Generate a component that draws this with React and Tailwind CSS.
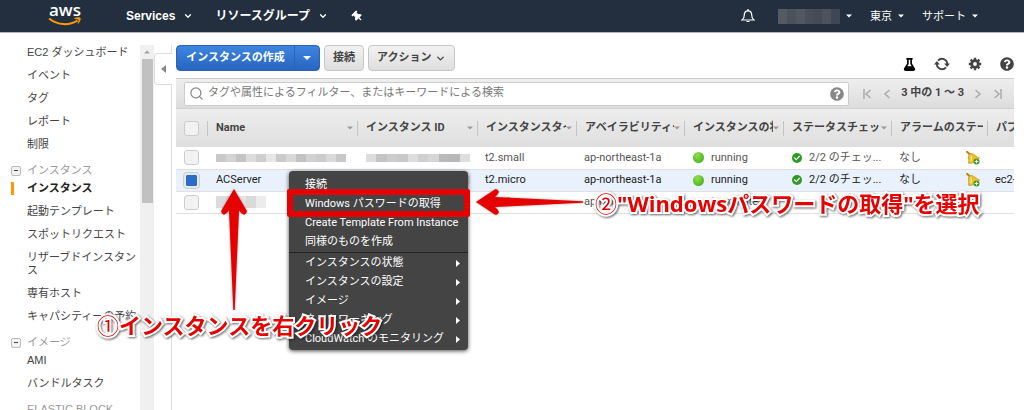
import React from 'react';
import { FaCheck, FaFlask, FaQuestionCircle, FaThumbtack } from 'react-icons/fa';
import { ChevronDown, Search } from 'lucide-react';

const sections = [
  {
    title: null,
    items: ['EC2 ダッシュボード', 'イベント', 'タグ', 'レポート', '制限'],
  },
  {
    title: 'インスタンス',
    items: [
      'インスタンス',
      '起動テンプレート',
      'スポットリクエスト',
      'リザーブドインスタンス',
      '専有ホスト',
      'キャパシティーの予約',
    ],
  },
  { title: 'イメージ', items: ['AMI', 'バンドルタスク'] },
  { title: 'ELASTIC BLOCK', items: [] },
];

const columns = [
  { label: 'Name', width: 'w-[150px]', sort: true },
  { label: 'インスタンス ID', width: 'w-[120px]', sort: true },
  { label: 'インスタンスタイプ', width: 'w-[99px]', sort: true },
  { label: 'アベイラビリティーゾーン', width: 'w-[108px]', sort: true },
  { label: 'インスタンスの状態', width: 'w-[99px]', sort: true },
  { label: 'ステータスチェック', width: 'w-[108px]', sort: true },
  { label: 'アラームのステータス', width: 'w-[96px]', sort: false },
  { label: 'パブリック DNS', width: '', sort: false },
];

const rows = [
  { name: null, id: true, type: 't2.small', zone: 'ap-northeast-1a', state: 'running', check: true, dns: '' },
  { name: 'ACServer', id: true, type: 't2.micro', zone: 'ap-northeast-1a', state: 'running', check: true, dns: 'ec2-', selected: true },
  { name: null, id: false, type: 't2.micro', zone: 'ap-northeast-1a', state: 'terminated', check: false, dns: '' },
];

const menuTop = ['接続', 'Windows パスワードの取得', 'Create Template From Instance', '同様のものを作成'];
const menuBottom = ['インスタンスの状態', 'インスタンスの設定', 'イメージ', 'ネットワーキング', 'CloudWatch のモニタリング'];

const mosaics = {
  wide: ['bg-[#c9c9c9]', 'bg-[#d4d4d4]', 'bg-[#c4c4c4]', 'bg-[#dcdcdc]', 'bg-[#cfcfcf]', 'bg-[#e6e6e6]', 'bg-[#cacaca]', 'bg-[#d8d8d8]', 'bg-[#c2c2c2]', 'bg-[#d2d2d2]', 'bg-[#cccccc]', 'bg-[#dadada]', 'bg-[#c8c8c8]'],
  id: ['bg-[#dcdcdc]', 'bg-[#c4c4c4]', 'bg-[#cdcdcd]', 'bg-[#c9c9c9]', 'bg-[#dddddd]', 'bg-[#cfcfcf]', 'bg-[#d6d6d6]', 'bg-[#bababa]', 'bg-[#b8b8b8]', 'bg-[#dedede]'],
  short: ['bg-[#dcdcdc]', 'bg-[#d4d4d4]', 'bg-[#e4e4e4]', 'bg-[#dadada]', 'bg-[#ececec]'],
  user: ['bg-[#555a62]', 'bg-[#4a515b]', 'bg-[#525861]', 'bg-[#484f59]', 'bg-[#444c57]', 'bg-[#4c535d]', 'bg-[#3f4753]'],
};

function Mosaic({ kind, className }) {
  return (
    <span className={`flex ${className}`}>
      {mosaics[kind].map((shade, idx) => (
        <span key={idx} className={`flex-1 ${shade}`} />
      ))}
    </span>
  );
}

function AwsLogo() {
  return (
    <a href="#home" aria-label="aws" className="flex w-9 flex-col items-center pb-1 text-white">
      <span className="font-['Open_Sans'] text-[17px] leading-4 font-semibold">aws</span>
      <svg viewBox="0 0 34 9" className="-mt-px h-[9px] w-[34px]" fill="none">
        <path d="M1 1.5C10 8.5 21 8.7 29.5 3.6" stroke="#f90" strokeWidth="2" />
        <path d="M26.5 1.4c2-.9 5-1 5.6-.3.5.8-.3 3.7-2 5.3.8-2 1-3.500.5-4-.6-.5-2.300-.5-4.100-1z" fill="#f90" stroke="#f90" strokeWidth=".8" />
      </svg>
    </a>
  );
}

function Caret({ className }) {
  return (
    <svg viewBox="0 0 8 4" className={`h-1 w-2 ${className}`}>
      <path d="M0 0h8L4 4z" fill="currentColor" />
    </svg>
  );
}

function Header() {
  return (
    <header className="flex h-[33px] items-center border-b border-[#b9b9b9] bg-[#232f3e] text-xs text-white">
      <div className="ml-[47px] flex items-center">
        <AwsLogo />
        <button className="ml-[43px] flex items-center gap-2 font-bold">
          Services
          <ChevronDown size={10} strokeWidth={3} />
        </button>
        <button className="ml-[22px] flex items-center gap-2 font-bold">
          リソースグループ
          <ChevronDown size={10} strokeWidth={3} />
        </button>
        <FaThumbtack size={11} className="ml-6 -rotate-45" />
      </div>
      <div className="mr-[46px] ml-auto flex items-center text-[11px]">
        <svg viewBox="0 0 14 14" className="h-[14px] w-[14px]" fill="none" stroke="#fff" strokeWidth="1.2">
          <path d="M1 11c2-1.500 2.300-2.500 2.300-5C3.300 3.300 5 1.800 7 1.800S10.700 3.300 10.700 6c0 2.500.3 3.500 2.300 5z" />
          <path d="M7 0v2M5.500 12.500h3" />
        </svg>
        <button aria-label="アカウント" className="ml-[23px] flex items-center gap-[6px]">
          <Mosaic kind="user" className="h-[15px] w-[62px]" />
          <Caret className="w-[6px]" />
        </button>
        <button className="ml-[18px] flex items-center gap-[6px]">
          東京
          <Caret className="w-[6px]" />
        </button>
        <button className="ml-[18px] flex items-center gap-[6px]">
          サポート
          <Caret className="w-[6px]" />
        </button>
      </div>
    </header>
  );
}

function Sidebar() {
  return (
    <aside className="flex w-[154px] shrink-0 pt-3">
      <nav className="flex w-[140px] flex-col gap-[13px] pt-px text-[11px] leading-[13px] text-[#444]">
        {sections.map((section, idx) => (
          <div key={idx}>
            {section.title && (
              <div className="mb-[5px] flex items-center gap-[6px] pl-[11px] text-[#999]">
                {section.items.length > 0 ? (
                  <button aria-label="折りたたむ" className="flex h-[10px] w-[10px] items-center justify-center rounded-xs border border-[#bbb] bg-[#f2f2f2]">
                    <span className="h-px w-1 bg-[#444]" />
                  </button>
                ) : (
                  <span className="w-[10px]" />
                )}
                <span className="whitespace-nowrap">{section.title}</span>
              </div>
            )}
            <ul className="flex flex-col gap-[10px]">
              {section.items.map((item) => {
                const active = item === section.title;
                return (
                  <li key={item} className={`ml-[11px] border-l-3 pl-[13px] ${active ? 'border-[#f90] font-bold text-[#222]' : 'border-transparent'}`}>
                    <a href="#nav">{item}</a>
                  </li>
                );
              })}
            </ul>
          </div>
        ))}
      </nav>
      <div className="flex w-[14px] flex-col items-center bg-[#f0f0f0]">
        <Caret className="my-[5px] w-[6px] rotate-180 text-[#a0a0a0]" />
        <div className="h-36 w-[11px] bg-[#c1c1c1]" />
      </div>
    </aside>
  );
}

function RefreshIcon() {
  return (
    <svg viewBox="0 0 16 14" className="h-[14px] w-4" fill="none" stroke="currentColor" strokeWidth="1.9">
      <path d="M4 3.700A5.200 5.200 0 0 1 13.200 7" />
      <path d="M12 10.300A5.200 5.200 0 0 1 2.800 7" />
      <path d="M10.200 6.500H16l-2.900 3.400zM5.800 7.500H0l2.900-3.400z" fill="currentColor" stroke="none" />
    </svg>
  );
}

function GearIcon() {
  return (
    <svg viewBox="0 0 14 14" className="h-[14px] w-[14px]" fill="none" stroke="currentColor">
      <circle cx="7" cy="7" r="3.300" strokeWidth="2.800" />
      <path d="M7 .8v2.400M7 10.800v2.400M.8 7h2.400M10.800 7h2.400M2.600 2.600l1.700 1.700M9.700 9.700l1.700 1.700M11.400 2.600 9.700 4.300M4.300 9.700l-1.700 1.700" strokeWidth="2.400" />
    </svg>
  );
}

function Toolbar() {
  const grey = 'flex h-[26px] items-center rounded-sm border border-[#c6c6c6] bg-linear-to-b from-[#f2f2f2] to-[#dedede] font-bold text-[#444]';
  return (
    <div className="flex items-start gap-1 text-[11px]">
      <div className="flex h-[26px] rounded-sm border border-[#2a62b5] bg-linear-to-b from-[#3d85e0] to-[#2765c0] font-bold text-white">
        <button className="w-[117px]">インスタンスの作成</button>
        <button aria-label="その他の作成方法" className="flex w-[25px] items-center justify-center border-l border-[#2a62b5]">
          <Caret className="" />
        </button>
      </div>
      <button className={`${grey} px-2`}>接続</button>
      <button className={`${grey} gap-1 px-2`}>
        アクション
        <ChevronDown size={11} strokeWidth={3} />
      </button>
      <div className="ml-auto flex items-center gap-[18px] pt-3 text-[#444]">
        <button aria-label="実験"><FaFlask size={13} className="text-black" /></button>
        <button aria-label="更新"><RefreshIcon /></button>
        <button aria-label="設定"><GearIcon /></button>
        <button aria-label="ヘルプ"><FaQuestionCircle size={14} /></button>
      </div>
    </div>
  );
}

function PageArrow({ flip, bar }) {
  return (
    <button aria-label={flip ? '次へ' : '前へ'} className="text-[#aaa]">
      <svg viewBox="0 0 9 10" className={`h-[10px] w-[9px] ${flip ? 'rotate-180' : ''}`} fill="none" stroke="currentColor" strokeWidth="1.5">
        <path d="M7.500 1 3 5l4.500 4" />
        {bar && <path d="M1 0v10" />}
      </svg>
    </button>
  );
}

function FilterBar() {
  return (
    <div className="flex h-[30px] items-center border-b border-[#d0d0d0] pr-3 pl-2">
      <div className="flex h-6 flex-1 items-center rounded-xs border border-[#ccc] bg-white px-1">
        <Search size={15} strokeWidth={2} className="text-[#888]" />
        <input
          aria-label="フィルター"
          placeholder="タグや属性によるフィルター、またはキーワードによる検索"
          className="min-w-0 flex-1 px-1 text-[11px] outline-none placeholder:text-[#777]"
        />
        <FaQuestionCircle size={14} className="text-[#888]" />
      </div>
      <div className="flex items-center gap-[10px] pl-[14px] text-[11px] font-bold text-[#444]">
        <PageArrow bar />
        <PageArrow />
        <span>3 中の 1 ～ 3</span>
        <PageArrow flip />
        <PageArrow flip bar />
      </div>
    </div>
  );
}

function RowCheck({ checked, label }) {
  return (
    <input
      type="checkbox"
      aria-label={label}
      defaultChecked={checked}
      className="ml-2 block h-[15px] w-[15px] appearance-none rounded-[3px] border border-[#ccc] bg-[#f2f2f2] bg-clip-padding checked:border-2 checked:border-[#e8e8e8] checked:bg-[#2a6cc8] checked:outline checked:outline-[#ccc]"
    />
  );
}

function BellAdd() {
  return (
    <svg viewBox="0 0 14 14" className="h-[14px] w-[14px] shrink-0">
      <path d="M1 .8 4.500 4" stroke="#b8860b" strokeWidth="2" strokeLinecap="round" />
      <path d="M3.500 3C7 1.200 8.500 5 13.300 6.800 12 9.500 7 13 2.500 12.300 3.500 8 1.200 5.500 3.500 3z" fill="#eec02a" stroke="#b48a10" strokeWidth=".6" />
      <path d="M5 4.500C5.800 6.500 5.500 8.500 5 10.500" stroke="#fbe795" strokeWidth="1.300" fill="none" />
      <circle cx="10.500" cy="10.500" r="3" fill="#3a9a1f" />
      <path d="M10.500 8.700v3.600M8.700 10.500h3.600" stroke="#fff" strokeWidth="1.100" />
    </svg>
  );
}

function InstanceTable() {
  return (
    <table className="w-full table-fixed border-collapse text-[11px]">
      <thead>
        <tr className="h-[38px] bg-linear-to-b from-[#eeeeee] to-[#dedede] text-left text-[#444]">
          <th className="w-[31px] p-0"><RowCheck label="すべて選択" /></th>
          {columns.map((col) => (
            <th key={col.label} className={`p-0 ${col.width}`}>
              <div className={`flex h-[15px] items-center border-l border-[#c4c4c4] pl-2 ${col.width ? 'pr-1' : ''}`}>
                <span className="flex-1 overflow-hidden whitespace-nowrap">{col.label}</span>
                {col.sort && <Caret className="w-[6px] shrink-0 text-[#999]" />}
              </div>
            </th>
          ))}
        </tr>
      </thead>
      <tbody>
        {rows.map((row, idx) => (
          <tr key={idx} className={`h-[22px] border-b border-[#e0e0e0] whitespace-nowrap ${row.selected ? 'bg-[#e9f1fd] text-[#222]' : 'text-[#555]'}`}>
            <td className="p-0"><RowCheck checked={row.selected} label="行を選択" /></td>
            <td className="p-0 pl-[9px]">
              {row.name || <Mosaic kind={idx === 0 ? 'wide' : 'short'} className={idx === 0 ? 'h-2 w-[130px]' : 'h-3 w-[50px]'} />}
            </td>
            <td className="p-0 pl-[9px]">{row.id && <Mosaic kind="id" className="h-2 w-[104px]" />}</td>
            <td className="p-0 pl-2">{row.type}</td>
            <td className="p-0 pl-2">{row.zone}</td>
            <td className="p-0 pl-[9px]">
              <span className="flex items-center gap-[7px]">
                <span className={`h-[11px] w-[11px] rounded-full ${row.state === 'running' ? 'bg-radial-[at_40%_30%] from-[#8ee04e] to-[#3aa410]' : 'bg-transparent'}`} />
                {row.state}
              </span>
            </td>
            <td className="p-0 pl-[9px]">
              {row.check && (
                <span className="flex items-center gap-[7px]">
                  <span className="flex h-[10px] w-[10px] items-center justify-center rounded-full bg-[#2f9a24] text-white">
                    <FaCheck size={6} />
                  </span>
                  2/2 のチェッ...
                </span>
              )}
            </td>
            <td className="p-0 pl-2">
              <span className="flex items-center justify-between pr-[7px]">
                なし
                {row.check && <BellAdd />}
              </span>
            </td>
            <td className="overflow-hidden p-0 pl-2">{row.dns}</td>
          </tr>
        ))}
      </tbody>
    </table>
  );
}

function ContextMenu() {
  return (
    <div role="menu" className="absolute top-[171px] left-[289px] w-[179px] rounded-sm bg-[#444] pt-[5px] pb-px font-['Roboto','Noto_Sans_CJK_JP',sans-serif] text-[11px] text-white shadow-[0_1px_4px_rgba(0,0,0,0.7)]">
      {menuTop.map((item) => (
        <button key={item} role="menuitem" className="block h-[19px] w-full pl-4 text-left whitespace-nowrap">{item}</button>
      ))}
      <div className="mb-px h-px bg-[#222]" />
      {menuBottom.map((item) => (
        <button key={item} role="menuitem" className="flex h-[19px] w-full items-center justify-between pr-2 pl-4 whitespace-nowrap">
          {item}
          <svg viewBox="0 0 4 7" className="h-[7px] w-1">
            <path d="M0 0l4 3.500L0 7z" fill="#fff" />
          </svg>
        </button>
      ))}
    </div>
  );
}

function Arrow({ className }) {
  return (
    <svg viewBox="0 0 26 122" preserveAspectRatio="none" className={`drop-shadow-[0_0_1px_rgba(0,0,0,0.4)] ${className}`}>
      <path d="M13 0 25.600 21.500Q26.300 24.500 23.500 25.600 21.500 26 18 21.500L13.700 121h-1.400L8 21.500Q4.500 26 2.500 25.600-.3 24.500.4 21.500z" fill="#e60000" />
    </svg>
  );
}

function Note({ num, children, className }) {
  return (
    <p className={`absolute font-['Open_Sans','Noto_Sans_CJK_JP',sans-serif] text-[22px] leading-8 font-bold whitespace-nowrap text-[#e60000] [paint-order:stroke_fill] [-webkit-text-stroke:4px_white] drop-shadow-[1px_1px_1px_rgba(0,0,0,0.6)] ${className}`}>
      <span className="font-normal">{num}</span>
      {children}
    </p>
  );
}

export default function App() {
  return (
    <div className="relative flex h-screen flex-col overflow-hidden bg-white font-['Liberation_Sans','Noto_Sans_CJK_JP',sans-serif]">
      <Header />
      <div className="flex min-h-0 flex-1">
        <Sidebar />
        <div className="flex w-[18px] shrink-0 flex-col pt-3">
          <div className="h-2 border-r border-[#ddd]" />
          <button aria-label="サイドバーを閉じる" className="flex h-8 items-center justify-center rounded-l-sm border border-r-0 border-[#ddd]">
            <svg viewBox="0 0 5 8" className="h-2 w-[5px]">
              <path d="M5 0v8L0 4z" fill="#888" />
            </svg>
          </button>
          <div className="flex-1 border-r border-[#ddd]" />
        </div>
        <main className="min-w-0 flex-1 pt-3 pl-1 font-['Roboto','Noto_Sans_CJK_JP',sans-serif]">
          <div className="pr-[10px]">
            <Toolbar />
            <div className="mt-[7px] border-t border-[#ccc] bg-linear-to-b from-[#eeeeee] to-[#dcdcdc]">
              <FilterBar />
            </div>
            <div className="overflow-hidden">
              <InstanceTable />
            </div>
          </div>
        </main>
      </div>
      <ContextMenu />
      <div className="absolute top-[189px] left-[287px] h-7 w-[183px] rounded-xs border-6 border-[#e60000]" />
      <Arrow className="absolute top-[189px] left-[221px] h-[122px] w-[26px]" />
      <Arrow className="absolute top-[148px] left-[517px] h-[108px] w-[26px] -rotate-90" />
      <Note num="①" className="top-[309px] left-[97px]">インスタンスを右クリック</Note>
      <Note num="②" className="top-[187px] left-[595px]">"Windowsパスワードの取得"を選択</Note>
    </div>
  );
}
